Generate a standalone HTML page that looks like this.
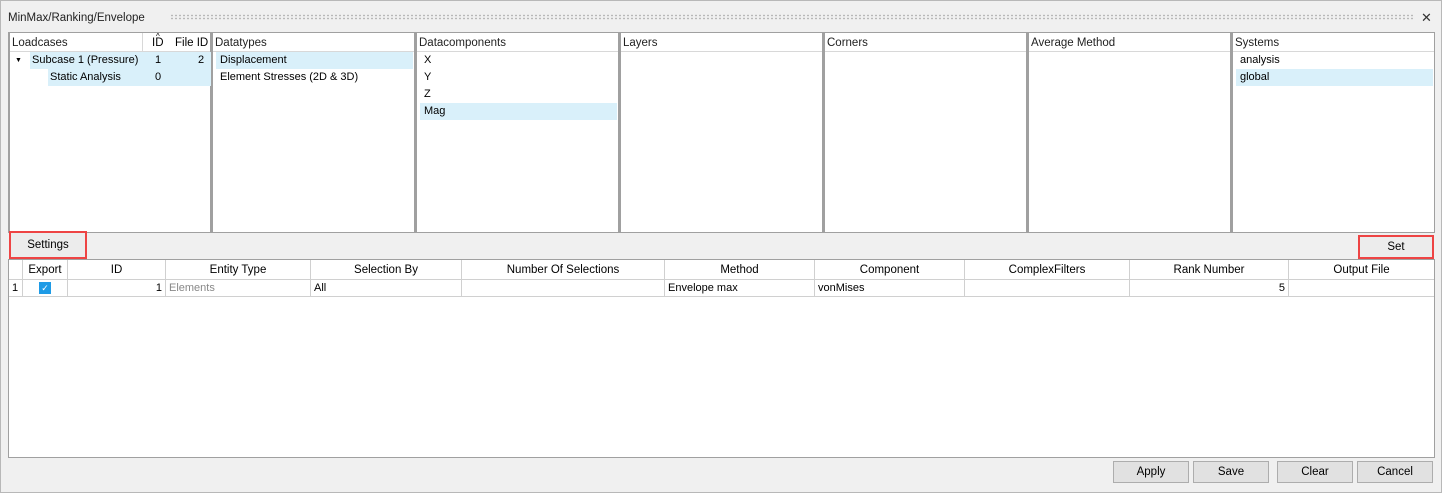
<!DOCTYPE html>
<html><head><style>
*{box-sizing:border-box;margin:0;padding:0}
body{width:1442px;height:493px;background:#f0f0f0;font-family:"Liberation Sans",sans-serif;font-size:11px;color:#000;position:relative;overflow:hidden}
.abs{position:absolute}
.frame{left:0;top:0;width:1442px;height:493px;border:1px solid #b8b8b8}
.panel{top:32px;height:201px;background:#fff;border:1px solid #a0a0a0;border-left:2px solid #a0a0a0}
.ph{position:absolute;left:0;right:0;top:0;height:19px;border-bottom:1px solid #d8d8d8;padding:4px 0 0 2px;font-size:11.5px;color:#222}
.row{position:absolute;height:17px;line-height:17px}
.sel{background:#d9f0fa}
.grid{left:8px;top:259px;width:1427px;height:199px;background:#fff;border:1px solid #a0a0a0}
.gh{position:absolute;top:0;height:20px;line-height:20px;text-align:center;border-right:1px solid #d0d0d0;border-bottom:1px solid #d0d0d0;background:#fff;font-size:11.5px}
.gc{position:absolute;top:20px;height:17px;line-height:16px;border-right:1px solid #d0d0d0;border-bottom:1px solid #d0d0d0;padding:0 3px}
.btn{top:461px;height:22px;width:76px;border:1px solid #adadad;background:#e1e1e1;text-align:center;line-height:20px;font-size:11.5px}
</style></head><body>
<div class="abs frame"></div>
<div class="abs" style="left:8px;top:12px;font-size:11.5px;color:#222">MinMax/Ranking/Envelope</div>
<div class="abs" style="left:170px;top:14px;width:1244px;height:6px;background-image:radial-gradient(circle,#a8a8a8 0.7px,transparent 0.9px);background-size:4px 3px"></div>
<div class="abs" style="left:1421px;top:10px;font-size:13px;color:#333">✕</div>

<div class="abs panel" style="left:8px;width:203px">
 <div class="ph">Loadcases</div>
 <div class="abs" style="left:132px;top:0;height:19px;border-left:1px solid #d8d8d8"></div>
 <div class="abs" style="left:142px;top:4px;font-size:11.5px">ID</div>
 <div class="abs" style="left:146px;top:-1px;font-size:8px">^</div>
 <div class="abs" style="left:165px;top:4px;font-size:11.5px">File ID</div>
 <div class="row sel" style="left:20px;width:181px;top:19px"><span style="padding-left:2px">Subcase 1 (Pressure)</span></div>
 <div class="row" style="left:145px;top:19px">1</div><div class="row" style="left:188px;top:19px">2</div>
 <div class="row" style="left:5px;top:19px;font-size:7px">▼</div>
 <div class="row sel" style="left:38px;width:163px;top:36px;padding-left:2px">Static Analysis</div>
 <div class="row" style="left:145px;top:36px">0</div>
</div>
<div class="abs panel" style="left:211px;width:204px">
 <div class="ph">Datatypes</div>
 <div class="row sel" style="left:3px;right:1px;top:19px;padding-left:4px">Displacement</div>
 <div class="row" style="left:3px;top:36px;padding-left:4px">Element Stresses (2D &amp; 3D)</div>
</div>
<div class="abs panel" style="left:415px;width:204px">
 <div class="ph">Datacomponents</div>
 <div class="row" style="left:3px;top:19px;padding-left:4px">X</div>
 <div class="row" style="left:3px;top:36px;padding-left:4px">Y</div>
 <div class="row" style="left:3px;top:53px;padding-left:4px">Z</div>
 <div class="row sel" style="left:3px;right:1px;top:70px;padding-left:4px">Mag</div>
</div>
<div class="abs panel" style="left:619px;width:204px"><div class="ph">Layers</div></div>
<div class="abs panel" style="left:823px;width:204px"><div class="ph">Corners</div></div>
<div class="abs panel" style="left:1027px;width:204px"><div class="ph">Average Method</div></div>
<div class="abs panel" style="left:1231px;width:204px">
 <div class="ph">Systems</div>
 <div class="row" style="left:3px;top:19px;padding-left:4px">analysis</div>
 <div class="row sel" style="left:3px;right:1px;top:36px;padding-left:4px">global</div>
</div>

<div class="abs" style="left:9px;top:231px;width:78px;height:28px;border:2px solid #ee4444;background:#ececec;text-align:center;line-height:24px;font-size:11.5px">Settings</div>
<div class="abs" style="left:1358px;top:235px;width:76px;height:24px;border:2px solid #ee4444;background:#ececec;text-align:center;line-height:20px;font-size:11.5px">Set</div>

<div class="abs grid">
 <div class="gh" style="left:0;width:14px"></div>
 <div class="gh" style="left:14px;width:45px">Export</div>
 <div class="gh" style="left:59px;width:98px">ID</div>
 <div class="gh" style="left:157px;width:145px">Entity Type</div>
 <div class="gh" style="left:302px;width:151px">Selection By</div>
 <div class="gh" style="left:453px;width:203px">Number Of Selections</div>
 <div class="gh" style="left:656px;width:150px">Method</div>
 <div class="gh" style="left:806px;width:150px">Component</div>
 <div class="gh" style="left:956px;width:165px">ComplexFilters</div>
 <div class="gh" style="left:1121px;width:159px">Rank Number</div>
 <div class="gh" style="left:1280px;width:145px;border-right:none">Output File</div>
 <div class="gc" style="left:0;width:14px">1</div>
 <div class="gc" style="left:14px;width:45px"><div style="margin:2px auto 0;width:12px;height:12px;background:#1e9be6;color:#fff;font-size:9px;line-height:12px;text-align:center">✓</div></div>
 <div class="gc" style="left:59px;width:98px;text-align:right">1</div>
 <div class="gc" style="left:157px;width:145px;color:#888">Elements</div>
 <div class="gc" style="left:302px;width:151px">All</div>
 <div class="gc" style="left:453px;width:203px"></div>
 <div class="gc" style="left:656px;width:150px">Envelope max</div>
 <div class="gc" style="left:806px;width:150px">vonMises</div>
 <div class="gc" style="left:956px;width:165px"></div>
 <div class="gc" style="left:1121px;width:159px;text-align:right">5</div>
 <div class="gc" style="left:1280px;width:145px;border-right:none"></div>
</div>

<div class="abs btn" style="left:1113px">Apply</div>
<div class="abs btn" style="left:1193px">Save</div>
<div class="abs btn" style="left:1277px">Clear</div>
<div class="abs btn" style="left:1357px">Cancel</div>
</body></html>
